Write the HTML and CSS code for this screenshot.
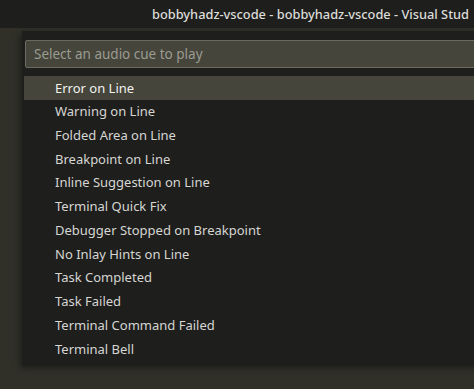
FILE: index.html
```html
<!DOCTYPE html>
<html>
<head>
    <title>Audio Cues</title>
    <link rel="stylesheet" href="styles.css">
</head>
<body>
    <div class="titlebar">
        <span class="title">bobbyhadz-vscode - bobbyhadz-vscode - Visual Stud</span>
    </div>

    <div class="workbench">
        <div class="quick-pick">
            <div class="quick-input">
                <input type="text" placeholder="Select an audio cue to play">
            </div>
            <ul class="cue-list">
                <li class="selected">Error on Line</li>
                <li>Warning on Line</li>
                <li>Folded Area on Line</li>
                <li>Breakpoint on Line</li>
                <li>Inline Suggestion on Line</li>
                <li>Terminal Quick Fix</li>
                <li>Debugger Stopped on Breakpoint</li>
                <li>No Inlay Hints on Line</li>
                <li>Task Completed</li>
                <li>Task Failed</li>
                <li>Terminal Command Failed</li>
                <li>Terminal Bell</li>
            </ul>
        </div>
    </div>
</body>
</html>
```

FILE: styles.css
```css
html, body {
    margin: 0;
    height: 100%;
    overflow: hidden;
}

body {
    font-family: 'Noto Sans', 'Open Sans', sans-serif;
    background-color: #303029;
    color: #d6d6d2;
}

.titlebar {
    height: 28px;
    background-color: #1e1e1d;
    display: flex;
    align-items: center;
    padding-left: 152px;
    white-space: nowrap;
    overflow: hidden;
}

.title {
    font-size: 12.8px;
    font-weight: 500;
    color: #dcdcd8;
}

.workbench {
    padding: 3px 0 0 22px;
}

.quick-pick {
    width: 470px;
    background-color: #1e1e1d;
    padding: 9px 0 5px 2px;
    box-shadow: -2px 2px 6px rgba(0,0,0,0.35);
}

.quick-input {
    padding-left: 1px;
    margin-bottom: 8px;
}

.quick-input input {
    box-sizing: border-box;
    width: 100%;
    height: 28px;
    background-color: #45453c;
    border: 1px solid #6a6a5e;
    border-radius: 2px;
    padding: 0 8px;
    font-family: inherit;
    font-size: 13.5px;
    color: #e0e0dc;
    outline: none;
}

.quick-input input::placeholder {
    color: #9b9b90;
}

.cue-list {
    list-style: none;
    margin: 0;
    padding: 0;
}

.cue-list li {
    height: 23.75px;
    line-height: 23.75px;
    padding-left: 31px;
    font-size: 13px;
    white-space: nowrap;
}

.cue-list li.selected {
    background-color: #45453c;
    color: #f2f2ee;
    height: 24px;
    line-height: 24px;
}
```
